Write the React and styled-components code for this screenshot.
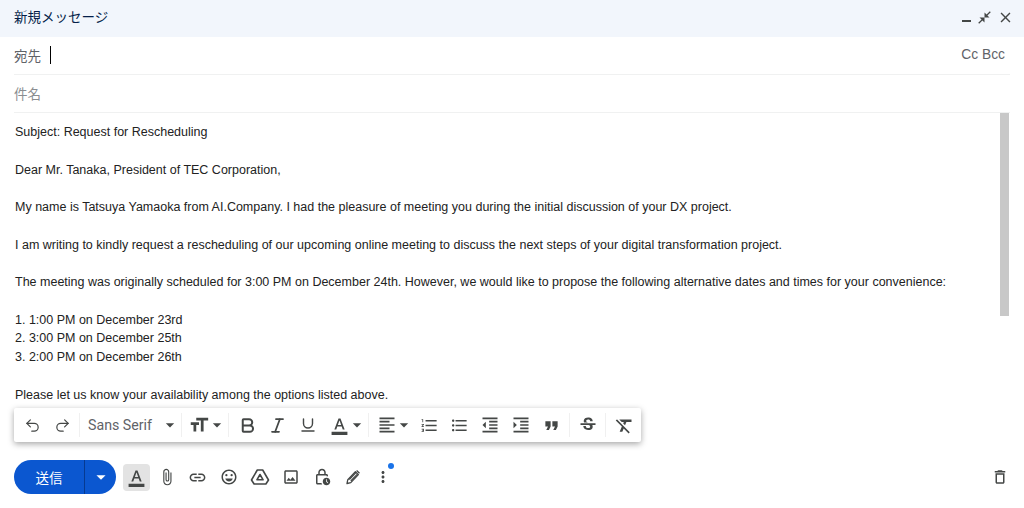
import React from 'react';
import styled, { createGlobalStyle } from 'styled-components';
import { Undo2, Redo2, Bold, Italic, Underline } from 'lucide-react';
import {
  MdClose,
  MdCloseFullscreen,
  MdArrowDropDown,
  MdFormatSize,
  MdFormatColorText,
  MdFormatAlignLeft,
  MdFormatListNumbered,
  MdFormatListBulleted,
  MdFormatIndentDecrease,
  MdFormatIndentIncrease,
  MdFormatQuote,
  MdStrikethroughS,
  MdFormatClear,
  MdAttachFile,
  MdLink,
  MdOutlineEmojiEmotions,
  MdOutlineImage,
  MdOutlineLockClock,
  MdMoreVert,
  MdDeleteOutline,
} from 'react-icons/md';

const GlobalStyle = createGlobalStyle`
  html, body {
    margin: 0;
    padding: 0;
    background: #ffffff;
  }
  body {
    font-family: "Liberation Sans", "Noto Sans CJK JP", sans-serif;
  }
  svg {
    flex: none;
  }
`;

function DriveIcon() {
  return (
    <svg width="20" height="20" viewBox="0 0 20 20" fill="none" stroke="#444746" strokeWidth="1.6" strokeLinejoin="round">
      <path d="M7.300 3h5.400l5.800 10-2.600 4H4.100l-2.600-4z" />
      <path d="M10 7.500l3.100 5.300H6.900z" />
    </svg>
  );
}

function PenIcon() {
  return (
    <svg width="18" height="18" viewBox="0 0 18 18" fill="none" stroke="#444746" strokeWidth="1.3" strokeLinejoin="round">
      <path d="M3 15.500l.8-3.800 7.600-8 3 2.900-7.600 8z" />
      <path d="M5.300 11.500l6.900-7.100M6.800 13l6.600-6.900M12.600 2.500l2.900 2.800" />
    </svg>
  );
}

const paragraphs = [
  ['Subject: Request for Rescheduling'],
  ['Dear Mr. Tanaka, President of TEC Corporation,'],
  ['My name is Tatsuya Yamaoka from AI.Company. I had the pleasure of meeting you during the initial discussion of your DX project.'],
  ['I am writing to kindly request a rescheduling of our upcoming online meeting to discuss the next steps of your digital transformation project.'],
  ['The meeting was originally scheduled for 3:00 PM on December 24th. However, we would like to propose the following alternative dates and times for your convenience:'],
  ['1. 1:00 PM on December 23rd', '2. 3:00 PM on December 25th', '3. 2:00 PM on December 26th'],
  ['Please let us know your availability among the options listed above.'],
];

export default function App() {
  return (
    <>
      <GlobalStyle />
      <Compose>
        <Header>
          <Title>新規メッセージ</Title>
          <WindowControls>
            <MinimizeBar />
            <MdCloseFullscreen size={15} />
            <MdClose size={17} />
          </WindowControls>
        </Header>
        <Field>
          <FieldLabel>宛先</FieldLabel>
          <Caret />
          <CcBcc>Cc Bcc</CcBcc>
        </Field>
        <Field>
          <FieldLabel $muted>件名</FieldLabel>
        </Field>
        <Body>
          {paragraphs.map((lines, i) => (
            <Paragraph key={i}>
              {lines.map((line) => (
                <div key={line}>{line}</div>
              ))}
            </Paragraph>
          ))}
          <ScrollThumb />
        </Body>
        <FormatBar>
          <Group $width={63} $flush>
            <ToolButton><Undo2 size={17} strokeWidth={1.7} /></ToolButton>
            <ToolButton><Redo2 size={17} strokeWidth={1.7} /></ToolButton>
          </Group>
          <Group $width={102}>
            <FontName>Sans Serif</FontName>
            <MdArrowDropDown size={20} />
          </Group>
          <Group $width={47}>
            <ToolButton $width={28}><MdFormatSize size={22} /></ToolButton>
            <Drop $pull={2}><MdArrowDropDown size={20} /></Drop>
          </Group>
          <Group $width={140}>
            <ToolButton><Bold size={19} strokeWidth={2.5} /></ToolButton>
            <ToolButton><Italic size={19} strokeWidth={2.1} /></ToolButton>
            <ToolButton><Underline size={18} strokeWidth={1.9} /></ToolButton>
            <ToolButton $width={32}><MdFormatColorText size={19} /></ToolButton>
            <Drop $pull={5}><MdArrowDropDown size={20} /></Drop>
          </Group>
          <Group $width={201}>
            <ToolButton $width={30}><MdFormatAlignLeft size={20} /></ToolButton>
            <Drop $pull={4}><MdArrowDropDown size={20} /></Drop>
            <ToolButton><MdFormatListNumbered size={19} /></ToolButton>
            <ToolButton><MdFormatListBulleted size={19} /></ToolButton>
            <ToolButton><MdFormatIndentDecrease size={20} /></ToolButton>
            <ToolButton><MdFormatIndentIncrease size={20} /></ToolButton>
            <ToolButton><MdFormatQuote size={21} /></ToolButton>
          </Group>
          <Group $width={36}>
            <ToolButton><MdStrikethroughS size={20} /></ToolButton>
          </Group>
          <Group $width={35} $last>
            <ToolButton><MdFormatClear size={21} /></ToolButton>
          </Group>
        </FormatBar>
        <Footer>
          <SendGroup>
            <SendButton>送信</SendButton>
            <SendMore><MdArrowDropDown size={22} /></SendMore>
          </SendGroup>
          <ActiveAction>
            <MdFormatColorText size={19} />
          </ActiveAction>
          <Action><MdAttachFile size={18} /></Action>
          <Action><MdLink size={19} /></Action>
          <Action><MdOutlineEmojiEmotions size={18} /></Action>
          <Action><DriveIcon /></Action>
          <Action><MdOutlineImage size={18} /></Action>
          <Action><MdOutlineLockClock size={18} /></Action>
          <Action><PenIcon /></Action>
          <MoreAction>
            <MdMoreVert size={18} />
            <BlueDot />
          </MoreAction>
          <Spacer />
          <Action><MdDeleteOutline size={18} /></Action>
        </Footer>
      </Compose>
    </>
  );
}

const Compose = styled.div`
  position: relative;
  width: 1024px;
  height: 508px;
  overflow: hidden;
  display: flex;
  flex-direction: column;
  background: #ffffff;
`;

const Header = styled.div`
  height: 37px;
  flex: none;
  display: flex;
  align-items: center;
  justify-content: space-between;
  padding: 0 10px 5px 14px;
  box-sizing: border-box;
  background: #f2f6fc;
`;

const Title = styled.div`
  font-size: 13.5px;
  color: #041e49;
`;

const WindowControls = styled.div`
  display: flex;
  align-items: center;
  gap: 5px;
  margin-top: 2px;
  color: #444746;
`;

const MinimizeBar = styled.div`
  width: 9px;
  height: 2px;
  margin: 7px 1px 0 0;
  background: #444746;
`;

const Field = styled.div`
  height: 38px;
  flex: none;
  margin: 0 14px;
  padding-bottom: 2px;
  box-sizing: border-box;
  display: flex;
  align-items: center;
  border-bottom: 1px solid #f0f1f1;
`;

const FieldLabel = styled.div`
  font-size: 13.5px;
  color: ${(props) => (props.$muted ? '#8a8d91' : '#5f6368')};
`;

const Caret = styled.div`
  width: 1px;
  height: 18px;
  margin: 1px 0 0 9px;
  background: #000000;
`;

const CcBcc = styled.div`
  margin: 0 5px 0 auto;
  font-size: 13.8px;
  color: #5f6368;
`;

const Body = styled.div`
  position: relative;
  flex: 1;
  overflow: hidden;
  padding: 10px 14px 0 15px;
  font-size: 12.5px;
  line-height: 18.75px;
  color: #222222;
`;

const Paragraph = styled.div`
  margin-bottom: 18.75px;
`;

const ScrollThumb = styled.div`
  position: absolute;
  top: 0;
  left: 1000px;
  width: 9px;
  height: 203px;
  background: #c8c8c8;
`;

const FormatBar = styled.div`
  position: absolute;
  left: 14px;
  top: 408px;
  width: 627px;
  height: 34px;
  box-sizing: border-box;
  padding-left: 3px;
  display: flex;
  align-items: center;
  background: #ffffff;
  border-radius: 2px;
  box-shadow: 0 2px 6px rgba(0, 0, 0, 0.35);
  color: #444746;
`;

const Group = styled.div`
  width: ${(props) => props.$width}px;
  height: 24px;
  flex: none;
  box-sizing: border-box;
  display: flex;
  align-items: center;
  padding-left: ${(props) => (props.$flush ? 0 : 3)}px;
  border-right: ${(props) => (props.$last ? 'none' : '1px solid #f0f0f0')};
`;

const ToolButton = styled.div`
  width: ${(props) => props.$width || 30.6}px;
  height: 24px;
  flex: none;
  display: flex;
  align-items: center;
  justify-content: center;
`;

const Drop = styled.div`
  width: 12px;
  flex: none;
  margin-left: -${(props) => props.$pull}px;
  margin-right: ${(props) => props.$pull}px;
  display: flex;
  align-items: center;
  justify-content: center;
`;

const FontName = styled.div`
  width: 77px;
  padding-left: 5px;
  box-sizing: border-box;
  font-family: "Roboto", "Liberation Sans", sans-serif;
  font-size: 14.2px;
  color: #5f6368;
  white-space: nowrap;
`;

const Footer = styled.div`
  height: 58px;
  flex: none;
  box-sizing: border-box;
  padding: 0 9px 4px 14px;
  display: flex;
  align-items: center;
  color: #444746;
`;

const SendGroup = styled.div`
  width: 102px;
  height: 34px;
  display: flex;
  margin-right: 7px;
  border-radius: 17px;
  overflow: hidden;
  background: #0b57d0;
  color: #ffffff;
`;

const SendButton = styled.div`
  width: 70px;
  display: flex;
  align-items: center;
  justify-content: center;
  font-size: 13.5px;
  border-right: 1px solid #063a91;
`;

const SendMore = styled.div`
  flex: 1;
  display: flex;
  align-items: center;
  justify-content: center;
`;

const ActiveAction = styled.div`
  width: 27px;
  height: 27px;
  margin-right: 1px;
  display: flex;
  align-items: center;
  justify-content: center;
  border-radius: 4px;
  background: #e3e3e3;
`;

const Action = styled.div`
  position: relative;
  width: 31px;
  height: 27px;
  flex: none;
  display: flex;
  align-items: center;
  justify-content: center;
`;

const MoreAction = styled(Action)`
  margin-left: -1px;
`;

const BlueDot = styled.div`
  position: absolute;
  top: -1px;
  right: 4px;
  width: 6px;
  height: 6px;
  border-radius: 50%;
  background: #1a73e8;
`;

const Spacer = styled.div`
  flex: 1;
`;
